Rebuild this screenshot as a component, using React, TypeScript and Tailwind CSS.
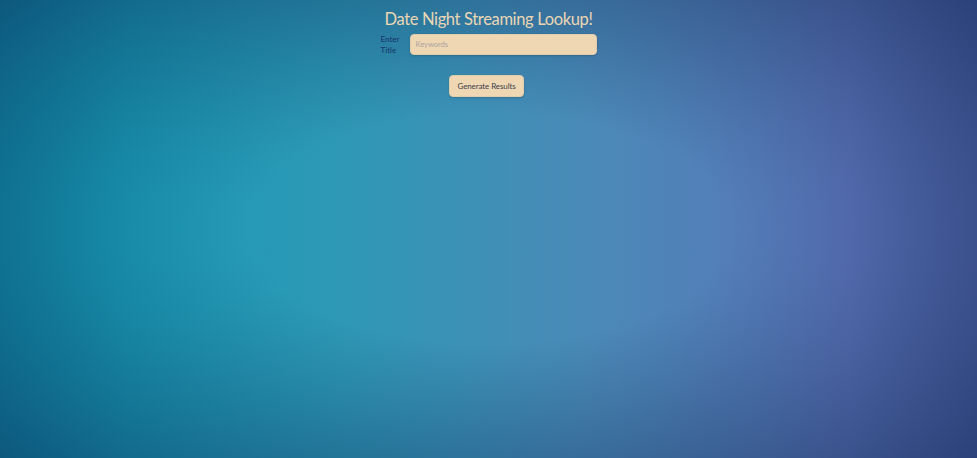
import React, { useState } from 'react';

export default function App() {
  const [title, setTitle] = useState('');

  return (
    <div className="min-h-screen w-full bg-[radial-gradient(ellipse_75%_75%_at_50%_50%,transparent_33%,rgba(6,28,72,0.52)_100%),linear-gradient(to_right,#1390ad_0%,#1a9cb7_13%,#2e98b6_35%,#4a8ab8_60%,#5b74b8_87%,#4e63a6_100%)] font-['Lato','Open_Sans',sans-serif]">
      <div className="flex flex-col items-center pt-[8px]">
        <h1 className="text-[16.5px] leading-[22px] text-[#ead6b4] tracking-[-0.35px]">
          Date Night Streaming Lookup!
        </h1>

        <form
          className="mt-[4px] flex items-center gap-[4px]"
          onSubmit={(e) => e.preventDefault()}
        >
          <label
            htmlFor="title"
            className="w-[25px] text-left text-[8px] leading-[10.5px] font-medium text-[#17386a]"
          >
            Enter Title
          </label>
          <input
            id="title"
            value={title}
            onChange={(e) => setTitle(e.target.value)}
            placeholder="Keywords"
            className="h-[21px] w-[187px] rounded-[4px] border border-[#e2cdaa] bg-[#efd7b4] px-[5px] text-[7.5px] text-[#444] placeholder:text-[#a8a39c] shadow-[0_1px_2px_rgba(0,0,0,0.15)] outline-none"
          />
        </form>

        <button
          type="button"
          className="mt-[20px] mr-[4px] h-[22px] w-[75px] rounded-[4px] border border-[#e2cdaa] bg-[#efd7b4] text-[8px] tracking-[-0.1px] text-[#3a3f4c] shadow-[0_1px_2px_rgba(0,0,0,0.15)]"
        >
          Generate Results
        </button>
      </div>
    </div>
  );
}
